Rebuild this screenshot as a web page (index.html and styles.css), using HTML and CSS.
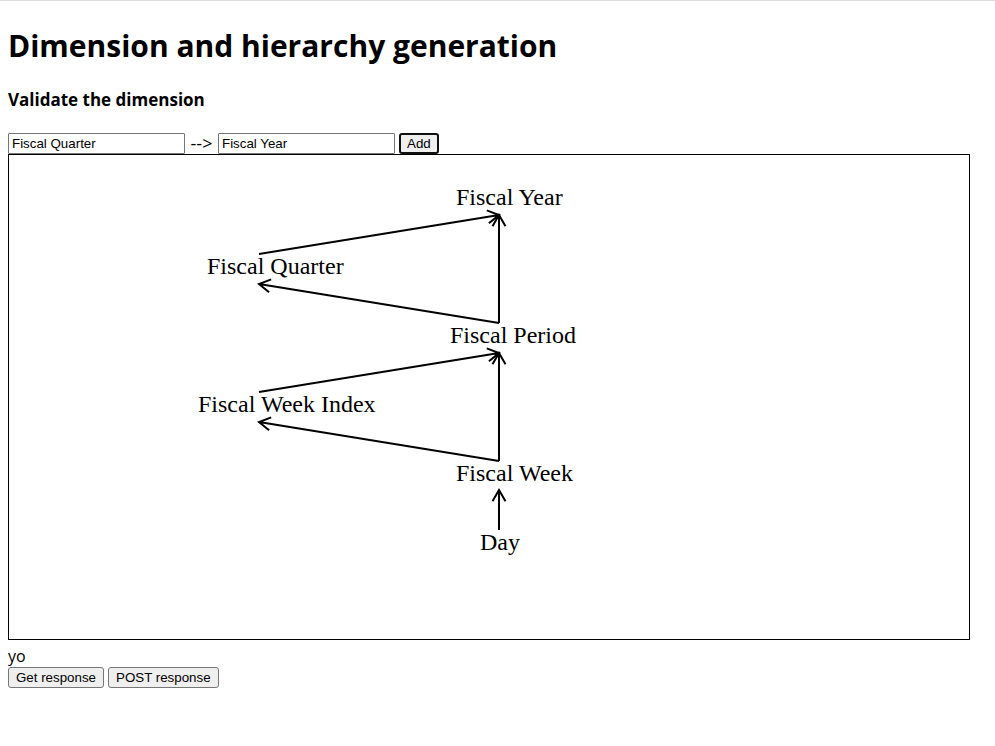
FILE: index.html
```
<!DOCTYPE html>
<html lang="en">
<head>
<meta charset="utf-8">
<title>Dimension and hierarchy generation</title>
<link rel="stylesheet" href="styles.css">
</head>
<body>
<main>
<h1>Dimension and hierarchy generation</h1>
<h3>Validate the dimension</h3>
<form class="relation">
<input class="field" type="text" aria-label="Child level" value="Fiscal Quarter">
<span class="arrow">--&gt;</span>
<input class="field" type="text" aria-label="Parent level" value="Fiscal Year">
<button class="button button-active" type="button">Add</button>
</form>
<svg class="graph" viewBox="0 0 960 484" role="img" aria-label="Hierarchy of the fiscal levels">
<g class="edges">
<path d="M490 375V335M483.5 346.3L490 335L496.5 346.3"/>
<path d="M490 306L250 267M260.1 275.2L250 267L262.2 262.4"/>
<path d="M490 306V198M483.5 209.3L490 198L496.5 209.3"/>
<path d="M250 237L490 198M477.8 193.4L490 198L479.9 206.2"/>
<path d="M490 168L250 129M260.1 137.2L250 129L262.2 124.4"/>
<path d="M490 168V60M483.5 71.3L490 60L496.5 71.3"/>
<path d="M250 99L490 60M477.8 55.4L490 60L479.9 68.2"/>
</g>
<g class="labels">
<text x="447" y="50">Fiscal Year</text>
<text x="198" y="119">Fiscal Quarter</text>
<text x="441" y="188">Fiscal Period</text>
<text x="189" y="257">Fiscal Week Index</text>
<text x="447" y="326">Fiscal Week</text>
<text x="471" y="395">Day</text>
</g>
</svg>
<p class="message">yo</p>
<div class="actions">
<button class="button" type="button">Get response</button>
<button class="button" type="button">POST response</button>
</div>
</main>
</body>
</html>
```
FILE: styles.css
```
* {
  box-sizing: border-box;
}

body {
  margin: 0;
  padding: 23px 8px 8px;
  border-top: 1px solid #dcdcdc;
  background: #fff;
  color: #000;
  font-family: "Segoe UI", "Open Sans", "Noto Sans", sans-serif;
  font-size: 16px;
}

h1 {
  margin: 0 0 21px;
  font-size: 30px;
  line-height: 43px;
}

h3 {
  margin: 0 0 21px;
  font-size: 17px;
  line-height: 24px;
}

.relation,
.actions {
  display: flex;
  flex-wrap: wrap;
  gap: 4px;
}

.field,
.button {
  height: 21px;
  border: 1px solid #767676;
  border-radius: 2px;
  color: #000;
  font-family: "Liberation Sans", Arial, sans-serif;
}

.field {
  width: 177px;
  padding: 1px 3px;
  border-radius: 1px;
  background: #fff;
}

.arrow {
  width: 25px;
  font-size: 18px;
  line-height: 20px;
  text-align: center;
}

.button {
  padding: 1px 7px;
  border-radius: 3px;
  background: #efefef;
}

.button-active {
  padding: 0 6px;
  border: 2px solid #101010;
}

.graph {
  display: block;
  width: 100%;
  max-width: 962px;
  border: 1px solid #000;
}

.edges {
  fill: none;
  stroke: #000;
  stroke-width: 2;
}

.labels {
  fill: #000;
  font-family: "Liberation Serif", "Times New Roman", serif;
  font-size: 24px;
}

.message {
  margin: 6px 0 0;
  font-size: 16px;
  line-height: 21px;
}
```
